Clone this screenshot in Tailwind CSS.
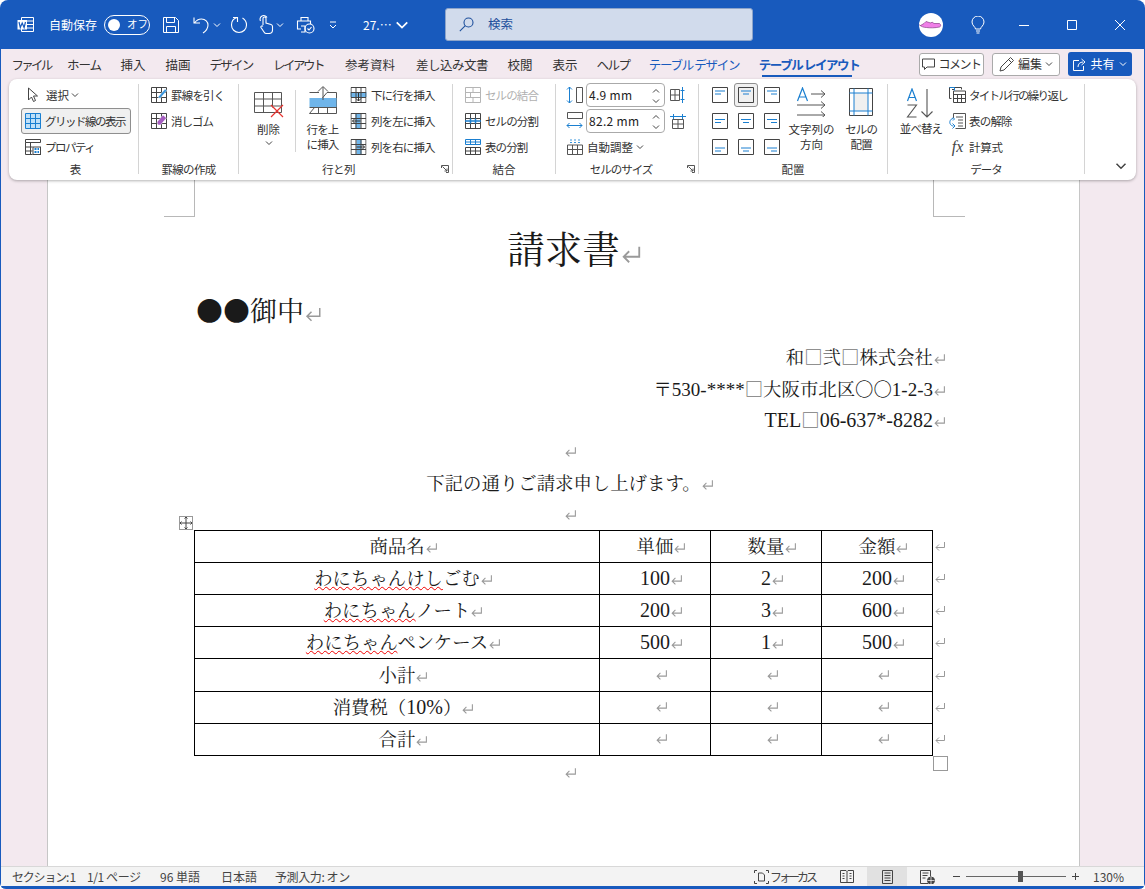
<!DOCTYPE html>
<html lang="ja">
<head>
<meta charset="utf-8">
<title>請求書 - Word</title>
<script src="https://cdn.jsdelivr.net/npm/@tailwindcss/browser@4"></script>
</head>
<body class="bg-white m-0 overflow-hidden">
<!-- shared icons -->
<svg class="hidden" width="0" height="0">
  <symbol id="ret" viewBox="0 0 12 12"><path d="M10.5 2v5.5H2M5 4.5l-3 3 3 3" fill="none" stroke="#9a9a9a" stroke-width="1"/></symbol>
  <symbol id="chev" viewBox="0 0 8 8"><path d="M1 2.5l3 3 3-3" fill="none" stroke="currentColor" stroke-width="1"/></symbol>
  <symbol id="launch" viewBox="0 0 8 8"><path d="M.5 3V.5h7v7H5M1.5 1.5l4.5 4.5M6 3.5V6H3.5" fill="none" stroke="#555" stroke-width="1"/></symbol>
  <symbol id="tbl" viewBox="0 0 16 16"><path d="M.5.5h15v15H.5zM.5 5.5h15M.5 10.5h15M5.5.5v15M10.5.5v15" fill="none" stroke="#444"/></symbol>
</svg>

<div class="w-[1145px] h-[889px] flex flex-col rounded-t-lg rounded-b-md overflow-hidden bg-[#185abd] font-['Noto_Sans_CJK_JP',sans-serif]">

  <!-- title bar -->
  <div class="h-[49px] shrink-0 flex items-center text-white relative">
    <svg class="ml-[17px] w-[17px] h-[17px]" viewBox="0 0 17 17"><path d="M4.5 1.5h12v14h-12z" fill="none" stroke="#fff"/><path d="M10 5h6M10 8.500h6M10 12h6" stroke="#fff"/><rect x="0.500" y="4" width="9.500" height="9.500" fill="#fff"/><path d="M2 6l1.300 5.500L5.200 7l1.900 4.500L8.500 6" fill="none" stroke="#185abd" stroke-width="1.200"/></svg>
    <span class="ml-[15px] w-[48px] text-[12px] whitespace-nowrap tracking-[0]">自動保存</span>
    <div class="ml-[7px] w-[46px] h-[20px] rounded-full border border-white flex items-center pl-[3px] gap-[7px]">
      <span class="w-[12px] h-[12px] rounded-full bg-white"></span>
      <span class="text-[10.5px] leading-none whitespace-nowrap">オフ</span>
    </div>
    <svg class="ml-[13px] w-[16px] h-[16px]" viewBox="0 0 16 16" fill="none" stroke="#fff"><path d="M.5.500h12l3 3v12H.5zM3.500.500v5h8v-5M3.500 15.500v-6h9v6"/></svg>
    <svg class="ml-[14px] w-[20px] h-[18px]" viewBox="0 0 20 18" fill="none" stroke="#fff" stroke-width="1.100"><path d="M1 1.500v5.500h6M1.500 7c2-3 4-4 7-4 4 0 6.500 3 6.500 6 0 3.500-2 6-5 8"/></svg>
    <svg class="ml-[0px] w-[8px] h-[8px] text-white"><use href="#chev"/></svg>
    <svg class="ml-[9px] w-[18px] h-[18px]" viewBox="0 0 18 18" fill="none" stroke="#fff" stroke-width="1.100"><path d="M7 1.500C3.500 2.500 1.500 5.500 1.500 9c0 4 3.200 7.500 7.500 7.500s7.500-3.500 7.500-7.500c0-3-1.500-5.500-4-7"/><path d="M3 1.500h4.500V6"/></svg>
    <svg class="ml-[9px] w-[18px] h-[19px]" viewBox="0 0 18 19" fill="none" stroke="#fff" stroke-width="1.100"><path d="M6 10V3.500a1.500 1.500 0 013 0V8l5 1.500c1 .3 1.500 1 1.500 2V15c0 2-1.500 3.500-3.500 3.500H9.500c-1 0-2-.5-2.500-1.500L4 12.500c-.5-1 .8-2.200 2-1.200M3.500 6A3.500 3.500 0 0110 2.500"/></svg>
    <svg class="ml-[1px] w-[8px] h-[8px] text-white"><use href="#chev"/></svg>
    <svg class="ml-[12px] w-[19px] h-[18px]" viewBox="0 0 19 18" fill="none" stroke="#fff" stroke-width="1.100"><path d="M5 5V1.500h7V5M5 13H1.500V5h13v3M5 10h4v6H5"/><circle cx="13.500" cy="12.500" r="4.500"/><path d="M11.500 12.500l1.500 1.500 2.500-3"/></svg>
    <svg class="ml-[13px] w-[10px] h-[10px]" viewBox="0 0 10 10" fill="none" stroke="#fff"><path d="M2 2h6M2 5l3 3 3-3"/></svg>
    <span class="ml-[25px] w-[32px] text-[12px] whitespace-nowrap">27.⋯</span>
    <svg class="ml-[0px] w-[14px] h-[14px] text-white"><use href="#chev"/></svg>
    <div class="ml-[36px] w-[308px] h-[33px] rounded-[3px] bg-[#d1dbec] border border-[#8da4c9] flex items-center pl-[13px] text-[#1d4f9c]">
      <svg class="w-[15px] h-[15px]" viewBox="0 0 15 15" fill="none" stroke="#1d4f9c" stroke-width="1.100"><circle cx="9.500" cy="5.500" r="4.500"/><path d="M6.300 8.700L.8 14.200"/></svg>
      <span class="ml-[14px] text-[12.5px]">検索</span>
    </div>
    <div class="ml-[166px] w-[24px] h-[24px] rounded-full bg-white flex items-center justify-center">
      <svg class="w-[24px] h-[24px]" viewBox="0 0 24 24"><path d="M1.500 12.500L5 10.500l2-2 3 1 2 .5 1-1 2 1.500h5.500c1.500 1 1.500 3 0 3.500-4 1-10 1-13 .5-3 0-5-1-7-2.500z" fill="#f07fe8" stroke="#8a3f8a" stroke-width=".7"/></svg>
    </div>
    <svg class="ml-[28px] w-[14px] h-[18px]" viewBox="0 0 14 18" fill="none" stroke="#fff"><path d="M4.500 13c0-2-3.500-3.500-3.500-7a6 6 0 0112 0c0 3.500-3.500 5-3.500 7zM5 15h4M5.500 17h3"/></svg>
    <svg class="ml-[34px] w-[10px] h-[10px]" viewBox="0 0 10 10" stroke="#fff"><path d="M0 5.500h10"/></svg>
    <svg class="ml-[38px] w-[10px] h-[10px]" viewBox="0 0 10 10" fill="none" stroke="#fff"><path d="M.5.500h9v9h-9z"/></svg>
    <svg class="ml-[38px] w-[10px] h-[10px]" viewBox="0 0 10 10" stroke="#fff"><path d="M0 0l10 10M10 0L0 10"/></svg>
  </div>

  <!-- page background, tabs, ribbon, document -->
  <div class="flex-1 min-h-0 bg-[#f3e9ef] flex flex-col mx-px">
    <div class="h-[30px] shrink-0 flex items-center pl-[6px] text-[12.5px] text-[#333] whitespace-nowrap">
      <span class="pt-[2px] w-[48px] text-center tracking-[-2.800px]">ファイル</span>
      <span class="pt-[2px] w-[58px] text-center tracking-[-1px]">ホーム</span>
      <span class="pt-[2px] w-[40px] text-center">挿入</span>
      <span class="pt-[2px] w-[50px] text-center">描画</span>
      <span class="pt-[2px] w-[56px] text-center tracking-[-1.800px]">デザイン</span>
      <span class="pt-[2px] w-[78px] text-center tracking-[-2.500px]">レイアウト</span>
      <span class="pt-[2px] w-[66px] text-center">参考資料</span>
      <span class="pt-[2px] w-[98px] text-center tracking-[-.5px]">差し込み文書</span>
      <span class="pt-[2px] w-[38px] text-center">校閲</span>
      <span class="pt-[2px] w-[52px] text-center">表示</span>
      <span class="pt-[2px] w-[44px] text-center tracking-[-1.500px]">ヘルプ</span>
      <span class="pt-[2px] w-[118px] text-center text-[#185abd] tracking-[-1.300px]">テーブル デザイン</span>
      <span class="pt-[2px] w-[112px] text-center text-[#185abd] font-semibold tracking-[-1.400px] relative">テーブル レイアウト<span class="absolute left-[9px] right-[13px] bottom-[-3px] h-[2px] bg-[#185abd]"></span></span>
      <div class="ml-[54px] w-[65px] h-[23px] rounded-[3px] border border-[#aaa] bg-white flex items-center justify-center gap-[3px] text-[12px]">
        <svg class="w-[13px] h-[12px]" viewBox="0 0 13 12" fill="none" stroke="#444"><path d="M.5 1h12v8H5L2.500 11.500V9h-2z"/></svg><span class="tracking-[-1.500px]">コメント</span>
      </div>
      <div class="ml-[8px] w-[68px] h-[23px] rounded-[3px] border border-[#aaa] bg-white flex items-center justify-center gap-[3px] text-[12px]">
        <svg class="w-[16px] h-[16px]" viewBox="0 0 16 16" fill="none" stroke="#444"><path d="M1 15l1-4L11.500 1.500l3 3L5 14zM9.500 3.500l3 3"/></svg><span>編集</span><svg class="w-[8px] h-[8px] text-[#444]"><use href="#chev"/></svg>
      </div>
      <div class="ml-[8px] w-[64px] h-[24px] rounded-[3px] bg-[#185abd] text-white flex items-center justify-center gap-[4px] text-[12px]">
        <svg class="w-[13px] h-[13px]" viewBox="0 0 13 13" fill="none" stroke="#fff"><path d="M6 2.500H.5v10h10V8M5 9c0-3 2-5 5-5M8.500 1L12 4 8.500 7"/></svg><span>共有</span><svg class="w-[8px] h-[8px] text-white"><use href="#chev"/></svg>
      </div>
    </div>

    <div class="flex-1 min-h-0 flex flex-col relative">
      <!-- ribbon card -->
      <div class="h-[101px] shrink-0 mx-[8px] bg-white rounded-lg shadow-[0_1px_3px_rgba(0,0,0,0.3)] flex relative z-10 text-[11.5px] text-[#333] whitespace-nowrap">

        <!-- 表 -->
        <div class="w-[130px] h-[90px] mt-[5px] border-r border-[#d4d4d4] flex flex-col items-center">
          <div class="h-[78px] shrink-0 -mt-[2px] self-stretch flex flex-col pl-[12px]">
            <div class="h-[26px] flex items-center pl-[6px]">
              <svg class="w-[12px] h-[16px]" viewBox="0 0 12 16"><path d="M1.500 1v12l3-3 2 4.500 2-1-2-4.500h4z" fill="#fff" stroke="#444"/></svg>
              <span class="pt-[2px] ml-[7px]">選択</span><svg class="ml-[2px] w-[8px] h-[8px] text-[#444]"><use href="#chev"/></svg>
            </div>
            <div class="h-[26px] w-[110px] rounded-[3px] border border-[#8f8f8f] bg-[#f0f0f0] flex items-center pl-[3px] shadow-[inset_0_0_0_1px_#eee]">
              <svg class="w-[16px] h-[16px]" viewBox="0 0 16 16"><path d="M.5.500h15v15H.5z" fill="#bfe0f8"/><path d="M.5.500h15v15H.5zM.5 5.500h15M.5 10.500h15M5.500.500v15M10.500.500v15" fill="none" stroke="#1a7fd0"/></svg>
              <span class="pt-[2px] ml-[4px] tracking-[-1.500px]">グリッド線の表示</span>
            </div>
            <div class="h-[26px] flex items-center pl-[4px]">
              <svg class="w-[16px] h-[16px]" viewBox="0 0 16 16" fill="none" stroke="#444"><path d="M.5.500h15v3H.5zM.5 3.500v12h7M5.500 3.500v12M.5 8h7M.5 12h7"/><rect x="8" y="8" width="7.500" height="7.500" fill="#fff"/><path d="M9.500 10h4.500M9.500 13h4.500" stroke="#1a7fd0" stroke-width="2" stroke-dasharray="2 1"/></svg>
              <span class="pt-[2px] ml-[4px] tracking-[-1.500px]">プロパティ</span>
            </div>
          </div>
          <span class="h-[20px] shrink-0 leading-[20px] -mt-[1px] ml-[4px]">表</span>
        </div>

        <!-- 罫線の作成 -->
        <div class="w-[100px] h-[90px] mt-[5px] border-r border-[#d4d4d4] flex flex-col items-center">
          <div class="h-[78px] shrink-0 -mt-[2px] self-stretch flex flex-col pl-[12px]">
            <div class="h-[26px] flex items-center">
              <svg class="w-[16px] h-[16px]" viewBox="0 0 16 16"><use href="#tbl"/><path d="M7 10L14 2l2 1.500L9 11.500z" fill="#3a96dd" stroke="#fff" stroke-width=".5"/></svg>
              <span class="pt-[2px] ml-[4px] tracking-[-.8px]">罫線を引く</span>
            </div>
            <div class="h-[26px] flex items-center">
              <svg class="w-[16px] h-[16px]" viewBox="0 0 16 16"><use href="#tbl"/><path d="M6 9l6-7 3.500 3-6 7H7z" fill="#a45cc0" stroke="#fff" stroke-width=".5"/></svg>
              <span class="pt-[2px] ml-[4px] tracking-[-1px]">消しゴム</span>
            </div>
          </div>
          <span class="h-[20px] shrink-0 leading-[20px] -mt-[1px] tracking-[-.7px]">罫線の作成</span>
        </div>

        <!-- 行と列 -->
        <div class="w-[214px] h-[90px] mt-[5px] border-r border-[#d4d4d4] flex flex-col items-center relative">
          <div class="h-[78px] shrink-0 -mt-[2px] self-stretch flex">
            <div class="ml-[3px] w-[53px] flex flex-col items-center pt-[9px]">
              <svg class="w-[32px] h-[28px]" viewBox="0 0 32 28" fill="none" stroke="#555"><path d="M1.500 1.500h27v20h-27M1.500 1.500v20M1.500 8h27M1.500 15h27M10.500 1.500v20M19.500 1.500v15"/><path d="M18 14l12 12M30 14L18 26" stroke="#e8322e" stroke-width="1.200"/></svg>
              <span class="leading-[16px] mt-[2px]">削除</span>
              <svg class="mt-[2px] w-[8px] h-[8px] text-[#444]"><use href="#chev"/></svg>
            </div>
            <div class="w-px h-[62px] mt-[8px] bg-[#d4d4d4]"></div>
            <div class="w-[53px] flex flex-col items-center pt-[4px]">
              <svg class="w-[30px] h-[29px]" viewBox="0 0 30 29" fill="none" stroke="#555"><path d="M1.500 6.500H11M19 6.500h9.500v21h-27zM1.500 21.500h27M10.500 21.500v6M19.500 21.500v6"/><rect x="1.500" y="12" width="27" height="9" fill="#6fb5ea" stroke="none"/><path d="M15 14V1M10 5.500l5-5 5 5" stroke="#555" fill="none"/></svg>
              <span class="leading-[15px] mt-[7px] text-center tracking-[-.8px]">行を上<br>に挿入</span>
            </div>
            <div class="ml-[1px] flex flex-col">
              <div class="h-[26px] flex items-center">
                <svg class="w-[17px] h-[16px]" viewBox="0 0 16 16"><rect x="0" y="5" width="16" height="5" fill="#6fb5ea"/><use href="#tbl"/><path d="M8 6v8M5.500 11.500L8 14l2.500-2.500" fill="none" stroke="#333"/></svg>
                <span class="pt-[2px] ml-[4px] tracking-[-.9px]">下に行を挿入</span>
              </div>
              <div class="h-[26px] flex items-center">
                <svg class="w-[17px] h-[16px]" viewBox="0 0 16 16"><rect x="5" y="0" width="5" height="16" fill="#6fb5ea"/><use href="#tbl"/><path d="M10 8H2M4.500 5.500L2 8l2.500 2.500" fill="none" stroke="#333"/></svg>
                <span class="pt-[2px] ml-[4px] tracking-[-.9px]">列を左に挿入</span>
              </div>
              <div class="h-[26px] flex items-center">
                <svg class="w-[17px] h-[16px]" viewBox="0 0 16 16"><rect x="6" y="0" width="5" height="16" fill="#6fb5ea"/><use href="#tbl"/><path d="M6 8h8M11.500 5.500L14 8l-2.500 2.500" fill="none" stroke="#333"/></svg>
                <span class="pt-[2px] ml-[4px] tracking-[-.9px]">列を右に挿入</span>
              </div>
            </div>
          </div>
          <span class="h-[20px] shrink-0 leading-[20px] -mt-[1px] mr-[14px] tracking-[-.5px]">行と列</span>
          <svg class="absolute right-[3px] bottom-[1px] w-[8px] h-[8px]"><use href="#launch"/></svg>
        </div>

        <!-- 結合 -->
        <div class="w-[103px] h-[90px] mt-[5px] border-r border-[#d4d4d4] flex flex-col items-center">
          <div class="h-[78px] shrink-0 -mt-[2px] self-stretch flex flex-col pl-[12px]">
            <div class="h-[26px] flex items-center text-[#b0b0b0]">
              <svg class="w-[16px] h-[16px]" viewBox="0 0 16 16" fill="none" stroke="#b5b5b5"><path d="M.5.500h15v15H.5zM.5 5.500h15M.5 10.500h15M5.500 5.500v5M8 .500v5M8 10.500v5"/></svg>
              <span class="pt-[2px] ml-[4px] tracking-[-.9px]">セルの結合</span>
            </div>
            <div class="h-[26px] flex items-center">
              <svg class="w-[16px] h-[16px]" viewBox="0 0 16 16"><use href="#tbl"/><path d="M0 8h16M5.500 5.500v5M10.500 5.500v5" stroke="#1a7fd0" stroke-width="1.500"/></svg>
              <span class="pt-[2px] ml-[4px] tracking-[-.9px]">セルの分割</span>
            </div>
            <div class="h-[26px] flex items-center">
              <svg class="w-[16px] h-[16px]" viewBox="0 0 16 16" fill="none" stroke="#444"><path d="M.5 8.500h15v7H.5zM.5 12h15M5.500 8.500v7M10.500 8.500v7"/><path d="M.5.500h15v5H.5zM.5 3h15M5.500.500v5M10.500.500v5" stroke="#1a7fd0"/></svg>
              <span class="pt-[2px] ml-[4px] tracking-[-.9px]">表の分割</span>
            </div>
          </div>
          <span class="h-[20px] shrink-0 leading-[20px] -mt-[1px]">結合</span>
        </div>

        <!-- セルのサイズ -->
        <div class="w-[143px] h-[90px] mt-[5px] border-r border-[#d4d4d4] flex flex-col items-center relative">
          <div class="h-[78px] shrink-0 -mt-[2px] self-stretch flex flex-col pl-[10px]">
            <div class="h-[26px] flex items-center">
              <svg class="w-[17px] h-[18px]" viewBox="0 0 17 18" fill="none"><path d="M3.500 1v16M1 3.500L3.500 1 6 3.500M1 14.500L3.500 17 6 14.500" stroke="#1a7fd0"/><path d="M10.500 1.500h6v15h-6z" stroke="#555"/></svg>
              <div class="ml-[3px] w-[79px] h-[24px] rounded-[4px] border border-[#aaa] flex items-center pl-[2px] text-[12px] text-[#222] relative tracking-[.3px]">4.9 mm
                <span class="absolute right-[4px] top-[3px] flex flex-col gap-[2px]"><svg class="w-[8px] h-[8px] rotate-180 text-[#444]"><use href="#chev"/></svg><svg class="w-[8px] h-[8px] text-[#444]"><use href="#chev"/></svg></span>
              </div>
              <svg class="ml-[5px] w-[16px] h-[16px]" viewBox="0 0 16 16" fill="none"><path d="M.5 2.500h9v11h-9zM.5 8h9M5 2.500v11" stroke="#555"/><path d="M12.500 0v16M10.500 3.500h4M10.500 12.500h4" stroke="#1a7fd0"/></svg>
            </div>
            <div class="h-[26px] flex items-center">
              <svg class="w-[17px] h-[18px]" viewBox="0 0 17 18" fill="none"><path d="M1.500.5h15v6H1.500z" stroke="#555"/><path d="M1 13.500h15M3.500 11L1 13.500 3.500 16M13.500 11L16 13.500 13.500 16" stroke="#1a7fd0"/></svg>
              <div class="ml-[3px] w-[79px] h-[24px] rounded-[4px] border border-[#aaa] flex items-center pl-[2px] text-[12px] text-[#222] relative tracking-[.3px]">82.2 mm
                <span class="absolute right-[4px] top-[3px] flex flex-col gap-[2px]"><svg class="w-[8px] h-[8px] rotate-180 text-[#444]"><use href="#chev"/></svg><svg class="w-[8px] h-[8px] text-[#444]"><use href="#chev"/></svg></span>
              </div>
              <svg class="ml-[5px] w-[16px] h-[16px]" viewBox="0 0 16 16" fill="none"><path d="M2.500 6.500h11v9h-11zM2.500 11h11M8 6.500v9" stroke="#555"/><path d="M0 3.500h16M3.500 1v5M12.500 1v5" stroke="#1a7fd0"/></svg>
            </div>
            <div class="h-[26px] flex items-center pl-[1px]">
              <svg class="w-[16px] h-[16px]" viewBox="0 0 16 16" fill="none"><path d="M.5 6h15M.5 10.500h15M.5 6v9.500h15V6M5.500 6v9.500M10.500 6v9.500" stroke="#555"/><path d="M3 1h2M7 1h2M11 1h2M3 3.500h2M7 3.500h2M11 3.500h2" stroke="#3a96dd"/></svg>
              <span class="pt-[2px] ml-[4px] tracking-[0]">自動調整</span><svg class="ml-[3px] w-[8px] h-[8px] text-[#444]"><use href="#chev"/></svg>
            </div>
          </div>
          <span class="h-[20px] shrink-0 leading-[20px] -mt-[1px] mr-[12px] tracking-[-1px]">セルのサイズ</span>
          <svg class="absolute right-[3px] bottom-[1px] w-[8px] h-[8px]"><use href="#launch"/></svg>
        </div>

        <!-- 配置 -->
        <div class="w-[189px] h-[90px] mt-[5px] border-r border-[#d4d4d4] flex flex-col items-center">
          <div class="h-[78px] shrink-0 -mt-[2px] self-stretch flex">
            <div class="ml-[8px] w-[78px] grid grid-cols-3 grid-rows-3 h-[78px]">
              <div class="flex items-center justify-center"><svg class="w-[16px] h-[16px]" viewBox="0 0 16 16" fill="none"><path d="M.5.500h15v15H.5z" stroke="#444"/><path d="M3 4h10M3 7h6" stroke="#1a7fd0"/></svg></div>
              <div class="flex items-center justify-center"><div class="w-[24px] h-[24px] rounded-[3px] border border-[#8f8f8f] bg-[#f0f0f0] flex items-center justify-center"><svg class="w-[16px] h-[16px]" viewBox="0 0 16 16" fill="none"><path d="M.5.500h15v15H.5z" stroke="#444"/><path d="M3 4h10M5 7h6" stroke="#1a7fd0"/></svg></div></div>
              <div class="flex items-center justify-center"><svg class="w-[16px] h-[16px]" viewBox="0 0 16 16" fill="none"><path d="M.5.500h15v15H.5z" stroke="#444"/><path d="M3 4h10M7 7h6" stroke="#1a7fd0"/></svg></div>
              <div class="flex items-center justify-center"><svg class="w-[16px] h-[16px]" viewBox="0 0 16 16" fill="none"><path d="M.5.500h15v15H.5z" stroke="#444"/><path d="M3 6.500h10M3 9.500h6" stroke="#1a7fd0"/></svg></div>
              <div class="flex items-center justify-center"><svg class="w-[16px] h-[16px]" viewBox="0 0 16 16" fill="none"><path d="M.5.500h15v15H.5z" stroke="#444"/><path d="M3 6.500h10M5 9.500h6" stroke="#1a7fd0"/></svg></div>
              <div class="flex items-center justify-center"><svg class="w-[16px] h-[16px]" viewBox="0 0 16 16" fill="none"><path d="M.5.500h15v15H.5z" stroke="#444"/><path d="M3 6.500h10M7 9.500h6" stroke="#1a7fd0"/></svg></div>
              <div class="flex items-center justify-center"><svg class="w-[16px] h-[16px]" viewBox="0 0 16 16" fill="none"><path d="M.5.500h15v15H.5z" stroke="#444"/><path d="M3 9h10M3 12h6" stroke="#1a7fd0"/></svg></div>
              <div class="flex items-center justify-center"><svg class="w-[16px] h-[16px]" viewBox="0 0 16 16" fill="none"><path d="M.5.500h15v15H.5z" stroke="#444"/><path d="M3 9h10M5 12h6" stroke="#1a7fd0"/></svg></div>
              <div class="flex items-center justify-center"><svg class="w-[16px] h-[16px]" viewBox="0 0 16 16" fill="none"><path d="M.5.500h15v15H.5z" stroke="#444"/><path d="M3 9h10M7 12h6" stroke="#1a7fd0"/></svg></div>
            </div>
            <div class="w-[54px] flex flex-col items-center pt-[5px]">
              <svg class="w-[30px] h-[30px]" viewBox="0 0 30 30" fill="none"><path d="M1.500 14L6.500 1l5 13M3.500 10h6" stroke="#1a7fd0" stroke-width="1.200"/><path d="M15 7h14M25 3.500L29 7l-4 3.500M1 18h28M25 14.500L29 18l-4 3.500M1 28h28M25 24.500L29 28l-4 3.500" stroke="#555"/></svg>
              <span class="leading-[15px] mt-[5px] text-center tracking-[0]">文字列の<br>方向</span>
            </div>
            <div class="ml-[-3px] w-[52px] flex flex-col items-center pt-[6px]">
              <svg class="w-[24px] h-[28px]" viewBox="0 0 24 28" fill="none"><rect x="5" y="5" width="14" height="18" fill="#f0f0f0"/><path d="M.5.500h23v27H.5z" stroke="#444"/><path d="M5 .500v27M19 .500v27M.5 5h23M.5 23h23" stroke="#1a7fd0"/></svg>
              <span class="leading-[15px] mt-[6px] text-center tracking-[-.9px]">セルの<br>配置</span>
            </div>
          </div>
          <span class="h-[20px] shrink-0 leading-[20px] -mt-[1px]">配置</span>
        </div>

        <!-- データ -->
        <div class="w-[197px] h-[90px] mt-[5px] border-r border-[#d4d4d4] flex flex-col items-center">
          <div class="h-[78px] shrink-0 -mt-[2px] self-stretch flex">
            <div class="ml-[8px] w-[50px] flex flex-col items-center pt-[6px]">
              <svg class="w-[30px] h-[30px]" viewBox="0 0 30 30" fill="none"><path d="M1.500 13L6 1l4.500 12M3 9.500h6" stroke="#1a7fd0" stroke-width="1.200"/><path d="M1.500 17h9L1.500 29h9M21 1v28M15.500 23.500L21 29l5.500-5.500" stroke="#555" stroke-width="1.100"/></svg>
              <span class="leading-[15px] mt-[3px] tracking-[-.9px]">並べ替え</span>
            </div>
            <div class="ml-[3px] flex flex-col">
              <div class="h-[26px] flex items-center">
                <svg class="w-[17px] h-[16px]" viewBox="0 0 17 16" fill="none" stroke="#444"><path d="M2.500 11.500H.5V.5h12v2M3 2.500h2"/><path d="M4.500 4h12v11.500h-12zM4.500 7.500h12M8.500 7.500v8M12.500 7.500v8M4.500 11.500h12" /><path d="M.5.500h5v3" stroke="#1a7fd0"/></svg>
                <span class="pt-[2px] ml-[3px] tracking-[-1.700px]">タイトル行の繰り返し</span>
              </div>
              <div class="h-[26px] flex items-center">
                <svg class="w-[17px] h-[17px]" viewBox="0 0 17 17" fill="none"><path d="M4.500 5V.5h12v15h-10M7 4h7M9 7h5M9 10h5M9 13h5" stroke="#555"/><path d="M4 5.500C1 6 .5 9 1 10.500s2 2.500 3.500 2.500M4 4.500L5.500 6 4 7.500M3.500 10.500L6 13l-2.500 2.500" stroke="#1a7fd0"/></svg>
                <span class="pt-[2px] ml-[3px] tracking-[-.8px]">表の解除</span>
              </div>
              <div class="h-[26px] flex items-center">
                <span class="w-[17px] text-[16px] leading-none italic font-['Liberation_Serif',serif] text-[#444] text-center">fx</span>
                <span class="pt-[2px] ml-[3px] tracking-[-.3px]">計算式</span>
              </div>
            </div>
          </div>
          <span class="h-[20px] shrink-0 leading-[20px] -mt-[1px] tracking-[-1px]">データ</span>
        </div>

        <div class="flex-1 relative">
          <svg class="absolute left-[30px] top-[81px] w-[12px] h-[12px] text-[#444]"><use href="#chev"/></svg>
        </div>
      </div>

      <!-- document page -->
      <div class="flex-1 min-h-0 overflow-hidden pl-[46px] pr-[64px]">
        <div class="relative h-full w-[1033px] bg-white border-x border-[#c6c6c6] pl-[146px] pt-[36px] text-[#1a1a1a] font-['Noto_Serif_CJK_JP','Noto_Sans_CJK_JP',serif] text-[18.4px]">
          <!-- crop marks -->
          <div class="absolute left-[116px] top-[0px] w-[31px] h-[37px] border-r border-b border-[#b8b8b8]"></div>
          <div class="absolute left-[885px] top-[0px] w-[32px] h-[37px] border-l border-b border-[#b8b8b8]"></div>

          <div class="w-[739px]">
            <div class="h-[62px] leading-[62px] text-center text-[37.5px]">請求書<span class="inline-block w-0 align-[-2px]"><svg class="w-[22px] h-[22px]"><use href="#ret"/></svg></span></div>
            <div class="h-[63px] leading-[63px] pl-[2px] text-[27px]">●●御中<span class="inline-block w-0 align-[-2px]"><svg class="w-[18px] h-[18px]"><use href="#ret"/></svg></span></div>
            <div class="h-[31.5px] leading-[31.5px] text-right">和<span class="text-[#777]">□</span>弐<span class="text-[#777]">□</span>株式会社<span class="inline-block w-0 align-[-1px]"><svg class="w-[13px] h-[13px]"><use href="#ret"/></svg></span></div>
            <div class="h-[31.5px] leading-[31.5px] text-right">〒<span class="text-[19px] font-['Liberation_Serif']">530-****</span><span class="text-[#777]">□</span>大阪市北区〇〇<span class="text-[19px] font-['Liberation_Serif']">1-2-3</span><span class="inline-block w-0 align-[-1px]"><svg class="w-[13px] h-[13px]"><use href="#ret"/></svg></span></div>
            <div class="h-[31.5px] leading-[31.5px] text-right"><span class="text-[20px] font-['Liberation_Serif']">TEL</span><span class="text-[#777]">□</span><span class="text-[20px] font-['Liberation_Serif']">06-637*-8282</span><span class="inline-block w-0 align-[-1px]"><svg class="w-[13px] h-[13px]"><use href="#ret"/></svg></span></div>
            <div class="h-[31.5px] leading-[31.5px] text-center"><span class="inline-block w-0 align-[1px]"><svg class="w-[13px] h-[13px]"><use href="#ret"/></svg></span></div>
            <div class="h-[31.5px] leading-[31.5px] text-center">下記の通りご請求申し上げます。<span class="inline-block w-0 align-[-1px]"><svg class="w-[13px] h-[13px]"><use href="#ret"/></svg></span></div>
            <div class="h-[31.5px] leading-[31.5px] text-center"><span class="inline-block w-0 align-[1px]"><svg class="w-[13px] h-[13px]"><use href="#ret"/></svg></span></div>

            <div class="relative w-[755px]">
              <!-- table handles -->
              <div class="absolute left-[-15px] top-[-14px] w-[14px] h-[14px] border border-[#999] bg-white flex items-center justify-center">
                <svg class="w-[12px] h-[12px]" viewBox="0 0 12 12" fill="none" stroke="#444"><path d="M6 0v12M0 6h12M4.500 1.500L6 0l1.500 1.500M4.500 10.500L6 12l1.500-1.500M1.500 4.500L0 6l1.500 1.500M10.500 4.500L12 6l-1.500 1.500"/></svg>
              </div>
              <div class="absolute left-[739px] top-[226px] w-[15px] h-[15px] border border-[#999] bg-white"></div>

              <table class="w-[755px] table-fixed border-collapse text-center text-[18.4px]">
                <colgroup><col class="w-[405px]"><col class="w-[111px]"><col class="w-[111px]"><col class="w-[111px]"><col class="w-[17px]"></colgroup>
                <tbody>
                  <tr class="h-[32px]">
                    <td class="border border-black p-0 pb-[2px] leading-none">商品名<span class="inline-block w-0 align-[-1px]"><svg class="w-[13px] h-[13px]"><use href="#ret"/></svg></span></td>
                    <td class="border border-black p-0 pb-[2px] leading-none">単価<span class="inline-block w-0 align-[-1px]"><svg class="w-[13px] h-[13px]"><use href="#ret"/></svg></span></td>
                    <td class="border border-black p-0 pb-[2px] leading-none">数量<span class="inline-block w-0 align-[-1px]"><svg class="w-[13px] h-[13px]"><use href="#ret"/></svg></span></td>
                    <td class="border border-black p-0 pb-[2px] leading-none">金額<span class="inline-block w-0 align-[-1px]"><svg class="w-[13px] h-[13px]"><use href="#ret"/></svg></span></td>
                    <td class="p-0 pb-[2px] pl-[1px] text-left leading-none"><svg class="inline w-[12px] h-[12px] align-[1px]"><use href="#ret"/></svg></td>
                  </tr>
                  <tr class="h-[32px]">
                    <td class="border border-black p-0 pb-[2px] leading-none"><span class="underline decoration-wavy decoration-[#f00000] decoration-1 underline-offset-[1px]">わにちゃんけし</span>ごむ<span class="inline-block w-0 align-[-1px]"><svg class="w-[13px] h-[13px]"><use href="#ret"/></svg></span></td>
                    <td class="border border-black p-0 pb-[2px] leading-none"><span class="text-[20px] font-['Liberation_Serif']">100</span><span class="inline-block w-0 align-[-1px]"><svg class="w-[13px] h-[13px]"><use href="#ret"/></svg></span></td>
                    <td class="border border-black p-0 pb-[2px] leading-none"><span class="text-[20px] font-['Liberation_Serif']">2</span><span class="inline-block w-0 align-[-1px]"><svg class="w-[13px] h-[13px]"><use href="#ret"/></svg></span></td>
                    <td class="border border-black p-0 pb-[2px] leading-none"><span class="text-[20px] font-['Liberation_Serif']">200</span><span class="inline-block w-0 align-[-1px]"><svg class="w-[13px] h-[13px]"><use href="#ret"/></svg></span></td>
                    <td class="p-0 pb-[2px] pl-[1px] text-left leading-none"><svg class="inline w-[12px] h-[12px] align-[1px]"><use href="#ret"/></svg></td>
                  </tr>
                  <tr class="h-[32px]">
                    <td class="border border-black p-0 pb-[2px] leading-none"><span class="underline decoration-wavy decoration-[#f00000] decoration-1 underline-offset-[1px]">わにちゃん</span>ノート<span class="inline-block w-0 align-[-1px]"><svg class="w-[13px] h-[13px]"><use href="#ret"/></svg></span></td>
                    <td class="border border-black p-0 pb-[2px] leading-none"><span class="text-[20px] font-['Liberation_Serif']">200</span><span class="inline-block w-0 align-[-1px]"><svg class="w-[13px] h-[13px]"><use href="#ret"/></svg></span></td>
                    <td class="border border-black p-0 pb-[2px] leading-none"><span class="text-[20px] font-['Liberation_Serif']">3</span><span class="inline-block w-0 align-[-1px]"><svg class="w-[13px] h-[13px]"><use href="#ret"/></svg></span></td>
                    <td class="border border-black p-0 pb-[2px] leading-none"><span class="text-[20px] font-['Liberation_Serif']">600</span><span class="inline-block w-0 align-[-1px]"><svg class="w-[13px] h-[13px]"><use href="#ret"/></svg></span></td>
                    <td class="p-0 pb-[2px] pl-[1px] text-left leading-none"><svg class="inline w-[12px] h-[12px] align-[1px]"><use href="#ret"/></svg></td>
                  </tr>
                  <tr class="h-[32px]">
                    <td class="border border-black p-0 pb-[2px] leading-none"><span class="underline decoration-wavy decoration-[#f00000] decoration-1 underline-offset-[1px]">わにちゃん</span>ペンケース<span class="inline-block w-0 align-[-1px]"><svg class="w-[13px] h-[13px]"><use href="#ret"/></svg></span></td>
                    <td class="border border-black p-0 pb-[2px] leading-none"><span class="text-[20px] font-['Liberation_Serif']">500</span><span class="inline-block w-0 align-[-1px]"><svg class="w-[13px] h-[13px]"><use href="#ret"/></svg></span></td>
                    <td class="border border-black p-0 pb-[2px] leading-none"><span class="text-[20px] font-['Liberation_Serif']">1</span><span class="inline-block w-0 align-[-1px]"><svg class="w-[13px] h-[13px]"><use href="#ret"/></svg></span></td>
                    <td class="border border-black p-0 pb-[2px] leading-none"><span class="text-[20px] font-['Liberation_Serif']">500</span><span class="inline-block w-0 align-[-1px]"><svg class="w-[13px] h-[13px]"><use href="#ret"/></svg></span></td>
                    <td class="p-0 pb-[2px] pl-[1px] text-left leading-none"><svg class="inline w-[12px] h-[12px] align-[1px]"><use href="#ret"/></svg></td>
                  </tr>
                  <tr class="h-[33px]">
                    <td class="border border-black p-0 pb-[2px] leading-none">小計<span class="inline-block w-0 align-[-1px]"><svg class="w-[13px] h-[13px]"><use href="#ret"/></svg></span></td>
                    <td class="border border-black p-0 pb-[2px] leading-none"><span class="inline-block w-0 align-[1px]"><svg class="w-[13px] h-[13px]"><use href="#ret"/></svg></span></td>
                    <td class="border border-black p-0 pb-[2px] leading-none"><span class="inline-block w-0 align-[1px]"><svg class="w-[13px] h-[13px]"><use href="#ret"/></svg></span></td>
                    <td class="border border-black p-0 pb-[2px] leading-none"><span class="inline-block w-0 align-[1px]"><svg class="w-[13px] h-[13px]"><use href="#ret"/></svg></span></td>
                    <td class="p-0 pb-[2px] pl-[1px] text-left leading-none"><svg class="inline w-[12px] h-[12px] align-[1px]"><use href="#ret"/></svg></td>
                  </tr>
                  <tr class="h-[32px]">
                    <td class="border border-black p-0 pb-[2px] leading-none">消費税（<span class="text-[20px] font-['Liberation_Serif']">10%</span>）<span class="inline-block w-0 align-[-1px]"><svg class="w-[13px] h-[13px]"><use href="#ret"/></svg></span></td>
                    <td class="border border-black p-0 pb-[2px] leading-none"><span class="inline-block w-0 align-[1px]"><svg class="w-[13px] h-[13px]"><use href="#ret"/></svg></span></td>
                    <td class="border border-black p-0 pb-[2px] leading-none"><span class="inline-block w-0 align-[1px]"><svg class="w-[13px] h-[13px]"><use href="#ret"/></svg></span></td>
                    <td class="border border-black p-0 pb-[2px] leading-none"><span class="inline-block w-0 align-[1px]"><svg class="w-[13px] h-[13px]"><use href="#ret"/></svg></span></td>
                    <td class="p-0 pb-[2px] pl-[1px] text-left leading-none"><svg class="inline w-[12px] h-[12px] align-[1px]"><use href="#ret"/></svg></td>
                  </tr>
                  <tr class="h-[32px]">
                    <td class="border border-black p-0 pb-[2px] leading-none">合計<span class="inline-block w-0 align-[-1px]"><svg class="w-[13px] h-[13px]"><use href="#ret"/></svg></span></td>
                    <td class="border border-black p-0 pb-[2px] leading-none"><span class="inline-block w-0 align-[1px]"><svg class="w-[13px] h-[13px]"><use href="#ret"/></svg></span></td>
                    <td class="border border-black p-0 pb-[2px] leading-none"><span class="inline-block w-0 align-[1px]"><svg class="w-[13px] h-[13px]"><use href="#ret"/></svg></span></td>
                    <td class="border border-black p-0 pb-[2px] leading-none"><span class="inline-block w-0 align-[1px]"><svg class="w-[13px] h-[13px]"><use href="#ret"/></svg></span></td>
                    <td class="p-0 pb-[2px] pl-[1px] text-left leading-none"><svg class="inline w-[12px] h-[12px] align-[1px]"><use href="#ret"/></svg></td>
                  </tr>
                </tbody>
              </table>
            </div>
            <div class="h-[28px] leading-[28px] text-center"><span class="inline-block w-0 align-[-1px]"><svg class="w-[13px] h-[13px]"><use href="#ret"/></svg></span></div>
          </div>
        </div>
      </div>

      <!-- status bar -->
      <div class="h-[20px] shrink-0 bg-[#f3f3f3] border-t border-[#d8d8d8] flex items-center text-[12px] text-[#444] whitespace-nowrap">
        <span class="ml-[11px] w-[75px] tracking-[-1.200px]">セクション: 1</span>
        <span class="w-[73px] tracking-[-.4px]">1/1 ページ</span>
        <span class="w-[61px]">96 単語</span>
        <span class="w-[54px]">日本語</span>
        <span class="w-[75px] tracking-[-.4px]">予測入力: オン</span>
        <svg class="ml-[404px] w-[15px] h-[14px]" viewBox="0 0 15 14" fill="none" stroke="#444"><path d="M.5 3V.5H3M12 .5h2.500V3M.5 11v2.500H3M12 13.500h2.500V11M4.500 11V3h4l2 2v6z"/></svg>
        <span class="ml-[1px] tracking-[-3px] w-[70px]">フォーカス</span>
        <svg class="w-[14px] h-[13px]" viewBox="0 0 14 13" fill="none" stroke="#444"><path d="M.5.500h5.500l1 1 1-1h5.500v12H8l-1 0-1 0H.5zM7 1.500v11M2.500 3.500h2M2.500 6h2M2.500 8.500h2M9.500 3.500h2M9.500 6h2M9.500 8.500h2"/></svg>
        <div class="ml-[13px] w-[40px] h-[20px] bg-[#e1e1e1] flex items-center justify-center">
          <svg class="w-[11px] h-[14px]" viewBox="0 0 11 14" fill="none" stroke="#444"><path d="M.5.500h10v13H.5zM2.500 3h6M2.500 5.500h6M2.500 8h6M2.500 10.500h6"/></svg>
        </div>
        <svg class="ml-[13px] w-[15px] h-[14px]" viewBox="0 0 15 14" fill="none" stroke="#444"><path d="M8 13.500H.5V.5h10v6M2.500 3h6M2.500 5.500h5M2.500 8h3"/><circle cx="11" cy="10.500" r="3.500" fill="#444"/><path d="M7.500 10.500h7M11 7v7" stroke="#fff" stroke-width=".7"/></svg>
        <span class="ml-[18px] w-[7px] h-px bg-[#444]"></span>
        <div class="ml-[6px] w-[100px] h-px bg-[#666] relative">
          <span class="absolute left-[52px] top-[-5px] w-[5px] h-[11px] bg-[#555]"></span>
        </div>
        <span class="ml-[6px] w-[7px] h-[7px] relative"><span class="absolute left-0 top-[3px] w-[7px] h-px bg-[#444]"></span><span class="absolute left-[3px] top-0 w-px h-[7px] bg-[#444]"></span></span>
        <span class="ml-[14px]">130%</span>
      </div>
      <div class="h-[3px] shrink-0 bg-[#185abd]"></div>
    </div>
  </div>
</div>
</body>
</html>
